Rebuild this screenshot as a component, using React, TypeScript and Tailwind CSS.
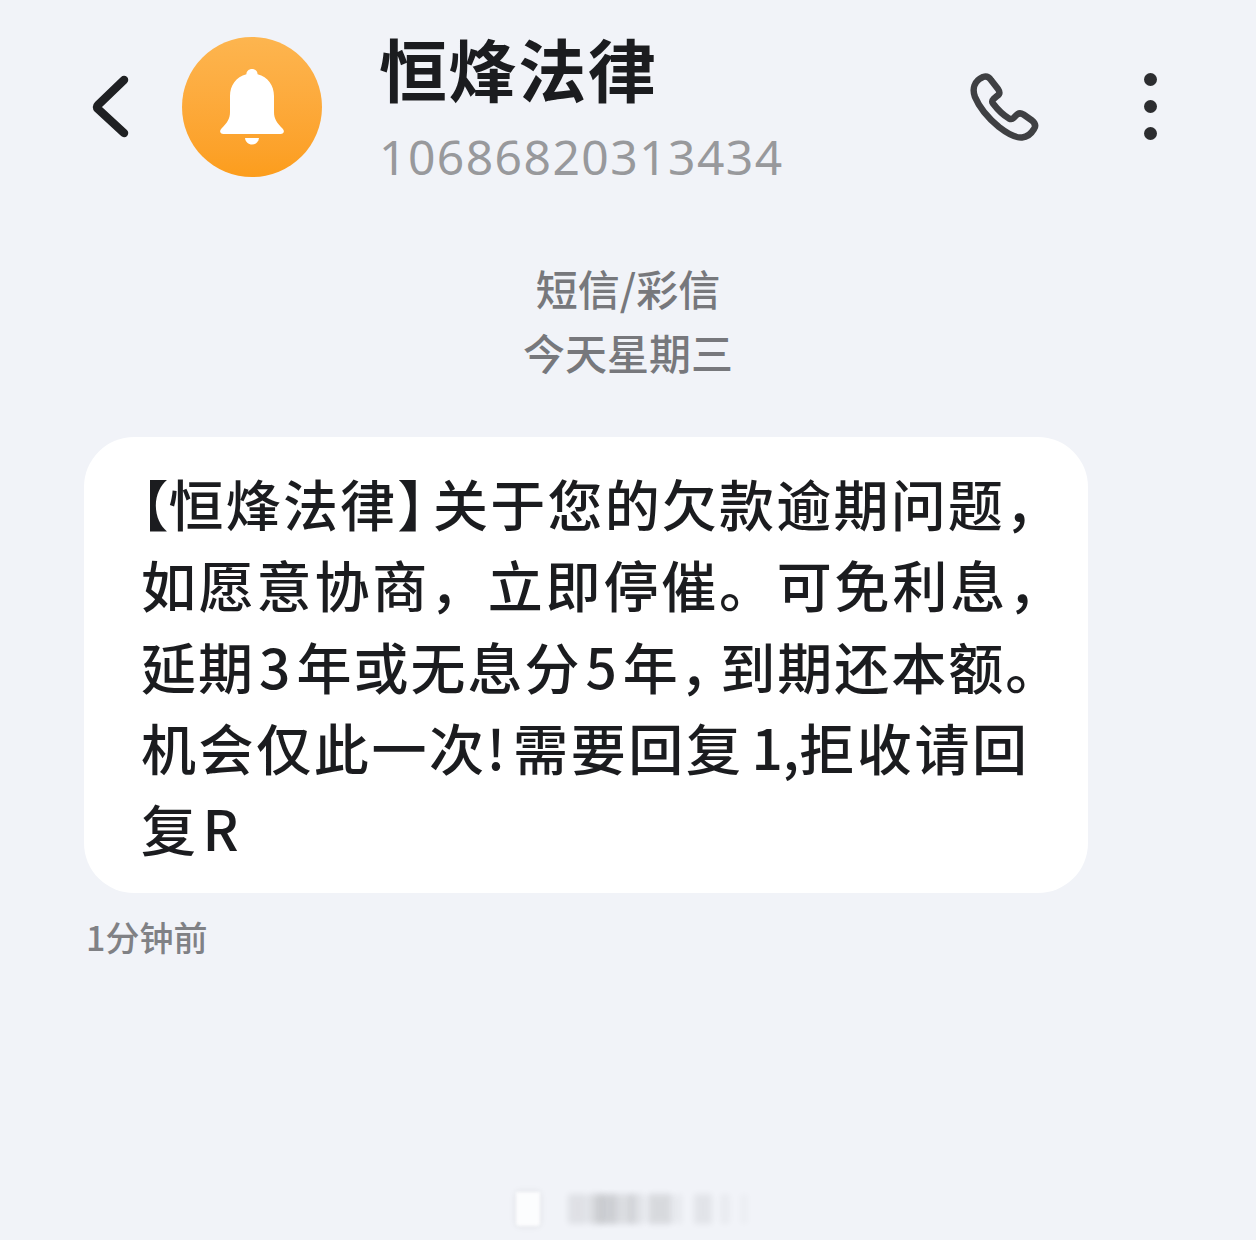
const cjk = "font-['Noto_Sans_CJK_SC','Noto_Sans',sans-serif]";

function Watermark() {
  const bars = [
    [568, 20, 0.07], [590, 14, 0.12], [606, 10, 0.06], [600, 34, 0.09], [630, 14, 0.07],
    [648, 24, 0.1], [674, 8, 0.04], [694, 18, 0.06], [720, 10, 0.03], [740, 8, 0.02],
  ];
  return (
    <>
      <div className="absolute left-[516px] top-[1192px] w-[24px] h-[34px] rounded-b-[4px] bg-white/80 shadow-[0_0_6px_rgba(0,0,0,0.1)] blur-[1.5px]" />
      {bars.map(([x, w, a]) => (
        <div
          key={x}
          className="absolute top-[1194px] h-[30px] blur-[3px] bg-black"
          style={{ left: x, width: w, opacity: a }}
        />
      ))}
    </>
  );
}

export default function App() {
  return (
    <div className={`relative w-[1256px] h-[1240px] overflow-hidden bg-[#f1f3f8] ${cjk}`}>
      <header className="flex items-start h-[230px] pl-[90px] pr-[99px] pt-[37px]">
        <svg width="42" height="66" viewBox="0 0 42 66" className="mt-[37px] shrink-0" fill="none">
          <path d="M34 6 L8 31 Q6 33 8 35 L34 59" stroke="#1f2023" strokeWidth="8.500" strokeLinecap="round" strokeLinejoin="round" />
        </svg>
        <div className="ml-[50px] w-[140px] h-[140px] shrink-0 rounded-full bg-gradient-to-b from-[#fdb54f] to-[#fc9d1c] flex items-center justify-center">
          <svg width="66" height="76" viewBox="0 0 66 76" fill="#fff">
            <path d="M33 0c3.200 0 5.500 2.200 5.600 5.200C49 8 55 16.500 55 27v16c0 7 3 11 8.500 16.500 2.500 2.500 1.500 5.500-2 5.500H4.500c-3.500 0-4.500-3-2-5.500C8 54 11 50 11 43V27c0-10.500 6-19 16.400-21.800C27.500 2.200 29.800 0 33 0z" />
            <path d="M26 69h14c-.5 4-3.300 6.500-7 6.500S26.500 73 26 69z" />
          </svg>
        </div>
        <div className="ml-[57px] flex-1 -mt-[5px]">
          <div className="text-[68px] leading-[72px] tracking-[1.6px] font-bold text-[#1b1c1f]">恒烽法律</div>
          <div className="mt-[28px] text-[48px] leading-[50px] tracking-[1.45px] text-[#98999c] font-['Noto_Sans',sans-serif]">10686820313434</div>
        </div>
        <svg width="72" height="74" viewBox="0 0 72 74" className="mt-[33px] shrink-0" fill="none">
          <path d="M15 7C18 6 21 7 23 10L30 19C32 22 32 24 29 26L25.500 29C24 30.500 24 32 25 33.500C30 40 35 45 41 48.500C43 49.500 44.500 49 45.500 48L48.500 45C50.500 43 53 43 55.500 44.500L64 50.500C67 53 68 56 66 59C63 64 59 67 54 67.500C48 68 40 64 31 57C20 48 12 39 7 27C4 19 6 11 15 7Z" stroke="#3f4043" strokeWidth="6.500" strokeLinejoin="round" />
        </svg>
        <div className="ml-[104px] mt-[36px] flex flex-col gap-[14px] shrink-0">
          <div className="w-[13px] h-[13px] rounded-full bg-[#2c2d30]" />
          <div className="w-[13px] h-[13px] rounded-full bg-[#2c2d30]" />
          <div className="w-[13px] h-[13px] rounded-full bg-[#2c2d30]" />
        </div>
      </header>

      <div className="flex flex-col items-center text-[#77787c] text-[42px] font-medium leading-[64px] mt-[26px]">
        <div>短信/彩信</div>
        <div>今天星期三</div>
      </div>

      <div className="ml-[84px] mt-[53px] w-[1004px] h-[456px] rounded-[50px] bg-white pl-[57px] pt-[25px] text-[55px] font-medium leading-[81.3px] text-[#1b1c1f] tracking-[2.6px] whitespace-nowrap">
        <div className="tracking-[2.2px]">
          <span className="[font-feature-settings:'halt'] tracking-normal">【</span>恒烽法律<span className="[font-feature-settings:'halt'] mr-[6px]">】</span>关于您的欠款逾期问题，
        </div>
        <div className="tracking-[2.8px]">如愿意协商，立即停催。可免利息，</div>
        <div className="tracking-[2px]">
          延期<span className="mx-[4px]">3</span>年或无息分<span className="mx-[4px]">5</span>年<span className="[font-feature-settings:'halt'] mr-[11px]">，</span>到期还本额。
        </div>
        <div>
          机会仅此一次<span className="mr-[5px]">!</span>需要回复<span className="ml-[8px] tracking-normal">1,</span>拒收请回
        </div>
        <div>
          复<span className="ml-[4px]">R</span>
        </div>
      </div>

      <div className="ml-[86px] mt-[21px] text-[34px] font-medium leading-[46px] text-[#808185]">1分钟前</div>

      <Watermark />
    </div>
  );
}
